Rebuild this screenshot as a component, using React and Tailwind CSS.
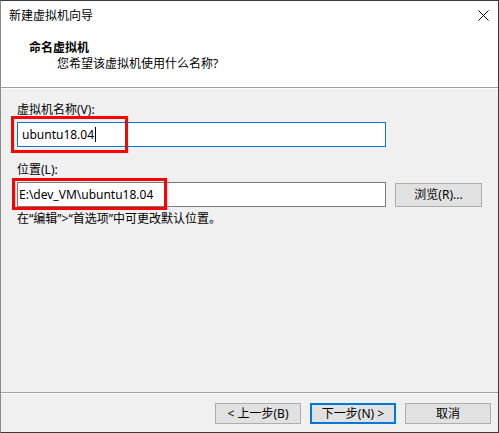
const font = { fontFamily: '"Noto Sans", "Noto Sans CJK SC", sans-serif' };

function WinButton({ children, primary }) {
    return (
        <div
            className={
                "w-[86px] h-[21px] flex items-center justify-center bg-[#e1e1e1] text-[12px] text-black " +
                (primary ? "border-2 border-[#0078d7]" : "border border-[#adadad]")
            }
        >
            {children}
        </div>
    );
}

export default function App() {
    return (
        <div
            className="relative w-[499px] h-[433px] flex flex-col border border-[#3a3a3a] border-l-[#8a8a8a] bg-[#f0f0f0] text-black overflow-hidden"
            style={font}
        >
            {/* title + header */}
            <div className="bg-white h-[87px] border-b border-[#a0a0a0] shrink-0">
                <div className="h-[29px] flex items-center justify-between pl-2 pr-[9px]">
                    <span className="text-[12px] leading-[16px]">新建虚拟机向导</span>
                    <svg width="11" height="11" viewBox="0 0 11 11">
                        <path d="M0.5 0.5 L10.5 10.5 M10.5 0.5 L0.5 10.5" stroke="#000" strokeWidth="1" fill="none" />
                    </svg>
                </div>
                <div className="mt-[10px] pl-[28px] text-[12px] leading-[16px] font-bold">命名虚拟机</div>
                <div className="pl-[56px] text-[12px] leading-[16px]">您希望该虚拟机使用什么名称?</div>
            </div>

            {/* body */}
            <div className="flex-1 px-4 pt-[13px] border-t border-white">
                <div className="text-[12px] leading-[16px]">虚拟机名称(V):</div>
                <div className="mt-[4px] w-[369px] h-[25px] bg-white border border-[#0078d7] flex items-center pl-[4px] text-[12px]">
                    <span>ubuntu18.04</span>
                    <span className="ml-[1px] w-px h-[15px] bg-black" />
                </div>
                <div className="mt-[15px] text-[12px] leading-[16px]">位置(L):</div>
                <div className="mt-[4px] flex items-center gap-[9px]">
                    <div className="w-[369px] h-[25px] bg-white border border-[#7a7a7a] flex items-center pl-[1px] text-[12px]">
                        E:\dev_VM\ubuntu18.04
                    </div>
                    <div className="w-[87px] h-[24px] flex items-center justify-center bg-[#e1e1e1] border border-[#adadad] text-[12px]">
                        浏览(R)...
                    </div>
                </div>
                <div className="mt-[4px] text-[12px] leading-[16px]">在“编辑”&gt;“首选项”中可更改默认位置。</div>
            </div>

            {/* footer */}
            <div className="h-[40px] shrink-0 border-t border-[#a0a0a0]">
                <div className="h-full border-t border-white flex justify-end gap-[9px] pt-[9px] pr-[7px]">
                    <WinButton>&lt; 上一步(B)</WinButton>
                    <WinButton primary>下一步(N) &gt;</WinButton>
                    <WinButton>取消</WinButton>
                </div>
            </div>

            {/* red annotation boxes */}
            <div className="absolute left-[10px] top-[115px] w-[117px] h-[37px] border-[3px] border-[#ff0000]" />
            <div className="absolute left-[11px] top-[177px] w-[155px] h-[32px] border-[3px] border-[#ff0000]" />
        </div>
    );
}
